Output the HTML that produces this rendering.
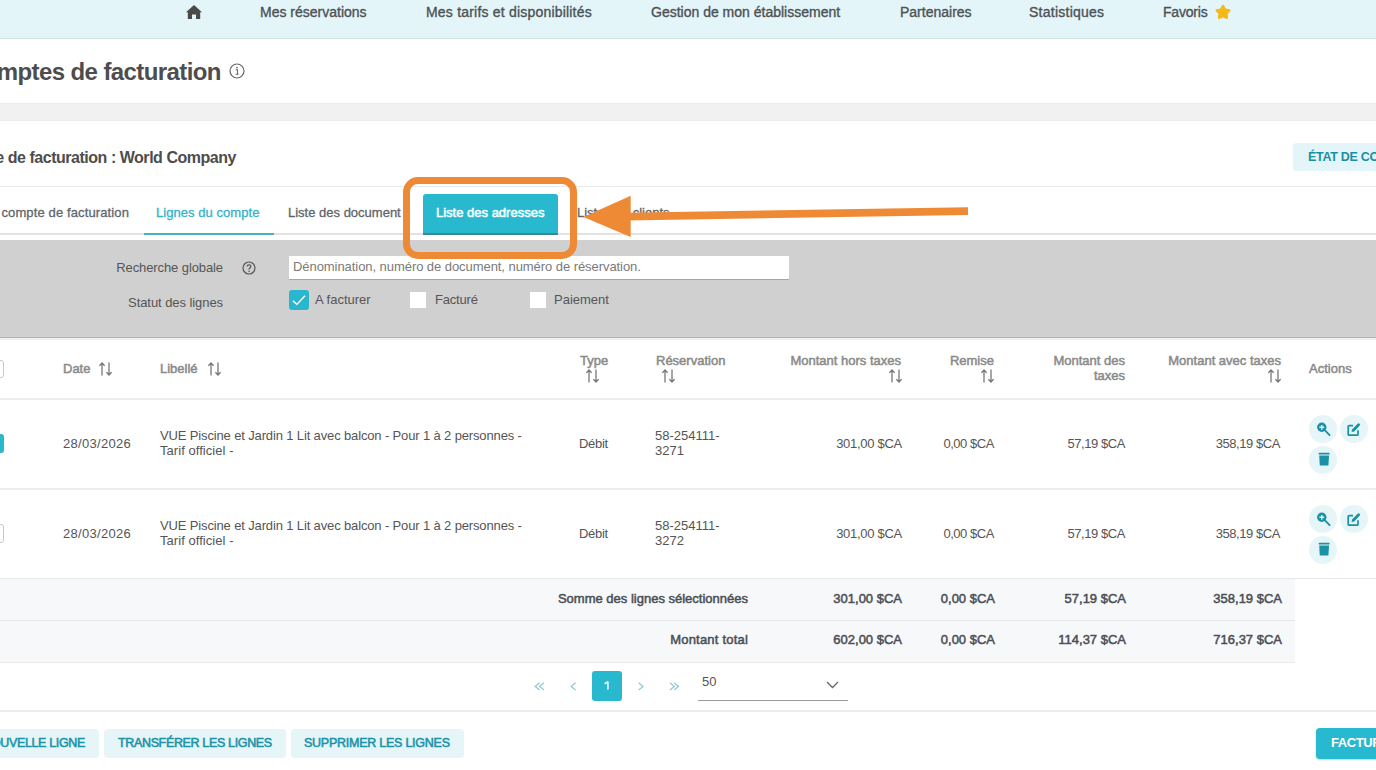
<!DOCTYPE html>
<html><head><meta charset="utf-8">
<style>
*{margin:0;padding:0;box-sizing:border-box}
html,body{width:1376px;height:770px;overflow:hidden;background:#fff;font-family:"Liberation Sans",sans-serif;color:#4d4d4d;position:relative}
.a{position:absolute}
.t{position:absolute;line-height:1;white-space:nowrap}
.r{text-align:right}
.nav{left:0;top:0;width:1376px;height:39px;background:#e3f5f9;border-bottom:1px solid #cfe3e5}
.nt{font-size:14px;color:#4e5254;top:5px;-webkit-text-stroke:0.35px #4e5254}
.band{left:0;top:103px;width:1376px;height:18px;background:#f1f1f1;border-top:1px solid #ececec;border-bottom:1px solid #ebebeb}
.hl{left:0;width:1376px;height:1px;background:#e8e8e8}
.tab{font-size:13px;color:#5f666b;top:206px;-webkit-text-stroke:0.3px currentColor}
.filter{left:0;top:240px;width:1376px;height:98px;background:#d0d0d0;border-bottom:1px solid #b4b4b4}
.fl{font-size:13px;color:#555;}
.th{font-size:13px;color:#8a8a8a;-webkit-text-stroke:0.5px #8a8a8a}
.td{font-size:13px;color:#555}
.tot{font-size:13px;color:#4a4f55;-webkit-text-stroke:0.5px #4a4f55}
.btn{background:#e5f5f8;border-radius:4px;height:29px;top:729px}
.bt{font-size:12.5px;color:#1c93a8;-webkit-text-stroke:0.55px #1c93a8;letter-spacing:-0.35px;top:737px}
.circ{width:28px;height:28px;border-radius:50%;background:#e5f5f8}
</style></head><body>

<!-- NAV -->
<div class="a nav"></div>
<svg class="a" style="left:186px;top:5px" width="16" height="14" viewBox="0 0 16 14"><path d="M8 0 L16 7.2 L14.2 7.2 L14.2 14 L10 14 L10 9.5 L6 9.5 L6 14 L1.8 14 L1.8 7.2 L0 7.2 Z" fill="#4a4a4a"/></svg>
<div class="t nt" style="left:260px">Mes réservations</div>
<div class="t nt" style="left:426px;letter-spacing:0.2px">Mes tarifs et disponibilités</div>
<div class="t nt" style="left:651px">Gestion de mon établissement</div>
<div class="t nt" style="left:900px">Partenaires</div>
<div class="t nt" style="left:1029px;letter-spacing:0.25px">Statistiques</div>
<div class="t nt" style="left:1163px;letter-spacing:-0.2px">Favoris</div>
<svg class="a" style="left:1205px;top:0px" width="40" height="30" viewBox="1205 0 40 30"><polygon points="1223.00,5.80 1225.17,9.51 1229.37,10.43 1226.52,13.64 1226.94,17.92 1223.00,16.20 1219.06,17.92 1219.48,13.64 1216.63,10.43 1220.83,9.51" fill="#f5b917" stroke="#f5b917" stroke-width="2.2" stroke-linejoin="round"/></svg>

<!-- TITLE -->
<div class="t" style="left:-34px;top:60px;font-size:24px;font-weight:bold;color:#4d4d4d;letter-spacing:-0.6px">Comptes de facturation</div>
<svg class="a" style="left:229px;top:63px" width="16" height="16" viewBox="0 0 16 16"><circle cx="8" cy="8" r="7" fill="none" stroke="#666" stroke-width="1.2"/><circle cx="8" cy="4.6" r="0.9" fill="#666"/><path d="M6.6 6.8 H8.5 V11.2 H9.5 M6.6 11.2 H9.5" fill="none" stroke="#666" stroke-width="1.1"/></svg>

<div class="a band"></div>

<!-- CARD HEADER -->
<div class="t" style="left:-53px;top:150px;font-size:16px;font-weight:bold;color:#4d4d4d;letter-spacing:-0.47px">Compte de facturation : World Company</div>
<div class="a" style="left:1293px;top:143px;width:120px;height:28px;background:#e3f5f9;border-radius:4px"></div>
<div class="t" style="left:1308px;top:151px;font-size:12.5px;font-weight:bold;color:#1a8fa3;letter-spacing:-0.3px">ÉTAT DE COMPTE</div>
<div class="a hl" style="top:186px"></div>

<!-- TABS -->
<div class="t tab r" style="right:1247px;letter-spacing:0.12px">Informations du compte de facturation</div>
<div class="t tab" style="left:156px;color:#35b3c6;letter-spacing:0.05px">Lignes du compte</div>
<div class="a" style="left:280px;top:200px;width:121px;height:25px;overflow:hidden"><div class="t tab" style="left:8px;top:6px">Liste des documents</div></div>
<div class="t tab" style="left:577px">Liste des clients</div>
<div class="a" style="left:0;top:233px;width:1376px;height:2px;background:#e2e2e2"></div>
<div class="a" style="left:144px;top:233px;width:130px;height:2px;background:#45b1c1"></div>
<div class="a" style="left:423px;top:194px;width:135px;height:41px;background:#28b9cf;border-radius:3px 3px 0 0;border-bottom:2px solid #3a8795"></div>
<div class="t" style="left:436px;top:206px;font-size:13px;color:#f4fdff;-webkit-text-stroke:0.55px #f4fdff">Liste des adresses</div>

<!-- FILTER -->
<div class="a filter"></div>
<div class="a" style="left:0;top:338px;width:1376px;height:1.5px;background:#efefef"></div>
<div class="t fl r" style="right:1153px;top:261px;letter-spacing:-0.1px">Recherche globale</div>
<svg class="a" style="left:242px;top:261px" width="14" height="14" viewBox="0 0 14 14"><circle cx="7" cy="7" r="6" fill="none" stroke="#555" stroke-width="1.2"/><path d="M5.1 5.4 C5.1 3.4 8.9 3.4 8.9 5.4 C8.9 6.7 7 6.8 7 8.4" fill="none" stroke="#555" stroke-width="1.2"/><circle cx="7" cy="10.2" r="0.8" fill="#555"/></svg>
<div class="a" style="left:289px;top:256px;width:500px;height:23.6px;background:#fff;border-bottom:1px solid #a5a5a5"></div>
<div class="t" style="left:293px;top:260px;font-size:13px;color:#7a7a7a;letter-spacing:-0.06px">Dénomination, numéro de document, numéro de réservation.</div>
<div class="t fl r" style="right:1153px;top:296px;letter-spacing:-0.07px">Statut des lignes</div>
<div class="a" style="left:289px;top:290px;width:20px;height:20px;background:#2ab6cc;border-radius:3px"></div>
<svg class="a" style="left:289px;top:290px" width="20" height="20" viewBox="0 0 20 20"><path d="M3.8 10.8 L7.9 14.4 L16 5.7" fill="none" stroke="#fff" stroke-width="1.4"/></svg>
<div class="t fl" style="left:315px;top:293px">A facturer</div>
<div class="a" style="left:410px;top:292px;width:16px;height:16px;background:#fff"></div>
<div class="t fl" style="left:435px;top:293px;letter-spacing:-0.2px">Facturé</div>
<div class="a" style="left:530px;top:292px;width:16px;height:16px;background:#fff"></div>
<div class="t fl" style="left:554px;top:293px">Paiement</div>

<!-- TABLE HEADER -->
<div class="a" style="left:-16px;top:360px;width:20px;height:18px;border:1px solid #c9c9c9;border-radius:3px;background:#fff"></div>
<div class="t th" style="left:63px;top:362px">Date</div>
<div class="t th" style="left:160px;top:362px">Libellé</div>
<div class="t th" style="left:580px;top:354px">Type</div>
<div class="t th" style="left:656px;top:354px">Réservation</div>
<div class="t th r" style="right:475px;top:354px">Montant hors taxes</div>
<div class="t th r" style="right:382px;top:354px">Remise</div>
<div class="t th r" style="right:251px;top:354px">Montant des</div>
<div class="t th r" style="right:251px;top:369px">taxes</div>
<div class="t th r" style="right:95px;top:354px">Montant avec taxes</div>
<div class="t th" style="left:1309px;top:362px">Actions</div>
<div class="a" style="left:0;top:398px;width:1376px;height:2px;background:#ededed"></div>

<svg class="a" style="left:99px;top:362px" width="13" height="14" viewBox="0 0 13 14"><path d="M3 1 V13.5 M0.4 3.8 L3 1 L5.6 3.8 M10 0.5 V13 M7.4 10.2 L10 13 L12.6 10.2" fill="none" stroke="#777" stroke-width="1.3"/></svg>
<svg class="a" style="left:208px;top:362px" width="13" height="14" viewBox="0 0 13 14"><path d="M3 1 V13.5 M0.4 3.8 L3 1 L5.6 3.8 M10 0.5 V13 M7.4 10.2 L10 13 L12.6 10.2" fill="none" stroke="#777" stroke-width="1.3"/></svg>
<svg class="a" style="left:586px;top:369px" width="13" height="14" viewBox="0 0 13 14"><path d="M3 1 V13.5 M0.4 3.8 L3 1 L5.6 3.8 M10 0.5 V13 M7.4 10.2 L10 13 L12.6 10.2" fill="none" stroke="#777" stroke-width="1.3"/></svg>
<svg class="a" style="left:662px;top:369px" width="13" height="14" viewBox="0 0 13 14"><path d="M3 1 V13.5 M0.4 3.8 L3 1 L5.6 3.8 M10 0.5 V13 M7.4 10.2 L10 13 L12.6 10.2" fill="none" stroke="#777" stroke-width="1.3"/></svg>
<svg class="a" style="left:889px;top:369px" width="13" height="14" viewBox="0 0 13 14"><path d="M3 1 V13.5 M0.4 3.8 L3 1 L5.6 3.8 M10 0.5 V13 M7.4 10.2 L10 13 L12.6 10.2" fill="none" stroke="#777" stroke-width="1.3"/></svg>
<svg class="a" style="left:981px;top:369px" width="13" height="14" viewBox="0 0 13 14"><path d="M3 1 V13.5 M0.4 3.8 L3 1 L5.6 3.8 M10 0.5 V13 M7.4 10.2 L10 13 L12.6 10.2" fill="none" stroke="#777" stroke-width="1.3"/></svg>
<svg class="a" style="left:1268px;top:369px" width="13" height="14" viewBox="0 0 13 14"><path d="M3 1 V13.5 M0.4 3.8 L3 1 L5.6 3.8 M10 0.5 V13 M7.4 10.2 L10 13 L12.6 10.2" fill="none" stroke="#777" stroke-width="1.3"/></svg>

<!-- ROW 1 -->
<div class="a" style="left:-16px;top:434px;width:20px;height:19px;background:#2ab6cc;border-radius:3px"></div>
<div class="t td" style="left:63px;top:437px;letter-spacing:0.3px">28/03/2026</div>
<div class="t td" style="left:160px;top:429px;letter-spacing:-0.14px">VUE Piscine et Jardin 1 Lit avec balcon - Pour 1 à 2 personnes -</div>
<div class="t td" style="left:160px;top:444px;letter-spacing:0.05px">Tarif officiel -</div>
<div class="t td" style="left:579px;top:437px;letter-spacing:-0.3px">Débit</div>
<div class="t td" style="left:655px;top:429px">58-254111-</div>
<div class="t td" style="left:655px;top:444px">3271</div>
<div class="t td r" style="right:474px;top:437px;letter-spacing:-0.28px">301,00 $CA</div>
<div class="t td r" style="right:382px;top:437px;letter-spacing:-0.45px">0,00 $CA</div>
<div class="t td r" style="right:251px;top:437px;letter-spacing:-0.44px">57,19 $CA</div>
<div class="t td r" style="right:96px;top:437px;letter-spacing:-0.44px">358,19 $CA</div>
<div class="a" style="left:0;top:488px;width:1376px;height:2px;background:#ededed"></div>

<!-- ROW 2 -->
<div class="a" style="left:-16px;top:524px;width:20px;height:19px;border:1px solid #c9c9c9;border-radius:3px;background:#fff"></div>
<div class="t td" style="left:63px;top:527px;letter-spacing:0.3px">28/03/2026</div>
<div class="t td" style="left:160px;top:519px;letter-spacing:-0.14px">VUE Piscine et Jardin 1 Lit avec balcon - Pour 1 à 2 personnes -</div>
<div class="t td" style="left:160px;top:534px;letter-spacing:0.05px">Tarif officiel -</div>
<div class="t td" style="left:579px;top:527px;letter-spacing:-0.3px">Débit</div>
<div class="t td" style="left:655px;top:519px">58-254111-</div>
<div class="t td" style="left:655px;top:534px">3272</div>
<div class="t td r" style="right:474px;top:527px;letter-spacing:-0.28px">301,00 $CA</div>
<div class="t td r" style="right:382px;top:527px;letter-spacing:-0.45px">0,00 $CA</div>
<div class="t td r" style="right:251px;top:527px;letter-spacing:-0.44px">57,19 $CA</div>
<div class="t td r" style="right:96px;top:527px;letter-spacing:-0.44px">358,19 $CA</div>
<div class="a" style="left:0;top:578px;width:1376px;height:1px;background:#e6e6e6"></div>

<div class="a circ" style="left:1309.3px;top:414.5px"></div>
<div class="a circ" style="left:1340px;top:414.5px"></div>
<div class="a circ" style="left:1309.3px;top:445.5px"></div>
<svg class="a" style="left:1310px;top:0px" width="60" height="480" viewBox="1310 0 60 480"><g transform="translate(0 0)"><circle cx="1321.8" cy="427.3" r="4.7" fill="#1a91a6"/><path d="M1321.8 424.9 V429.7 M1319.4 427.3 H1324.2" stroke="#e6f6f9" stroke-width="1.4"/><path d="M1325.2 430.7 L1329.6 435.1" stroke="#1a91a6" stroke-width="1.9" stroke-linecap="round"/>
<path d="M1353 425.6 H1349.2 A1 1 0 0 0 1348.2 426.6 V434.2 A1 1 0 0 0 1349.2 435.2 H1357 A1 1 0 0 0 1358 434.2 V430.2" fill="none" stroke="#1a91a6" stroke-width="1.7"/><path d="M1351.6 432 L1352 429.4 L1357.6 423.8 A1.2 1.2 0 0 1 1359.6 425.8 L1354.2 431.6 Z" fill="#1a91a6"/>
<rect x="1318.6" y="452.8" width="11" height="1.8" rx="0.6" fill="#1a91a6"/><path d="M1319.2 455.4 H1329 L1328.4 465.4 H1319.8 Z" fill="#1a91a6"/></g></svg>
<div class="a circ" style="left:1309.3px;top:504.5px"></div>
<div class="a circ" style="left:1340px;top:504.5px"></div>
<div class="a circ" style="left:1309.3px;top:535.5px"></div>
<svg class="a" style="left:1310px;top:90px" width="60" height="480" viewBox="1310 90 60 480"><g transform="translate(0 90)"><circle cx="1321.8" cy="427.3" r="4.7" fill="#1a91a6"/><path d="M1321.8 424.9 V429.7 M1319.4 427.3 H1324.2" stroke="#e6f6f9" stroke-width="1.4"/><path d="M1325.2 430.7 L1329.6 435.1" stroke="#1a91a6" stroke-width="1.9" stroke-linecap="round"/>
<path d="M1353 425.6 H1349.2 A1 1 0 0 0 1348.2 426.6 V434.2 A1 1 0 0 0 1349.2 435.2 H1357 A1 1 0 0 0 1358 434.2 V430.2" fill="none" stroke="#1a91a6" stroke-width="1.7"/><path d="M1351.6 432 L1352 429.4 L1357.6 423.8 A1.2 1.2 0 0 1 1359.6 425.8 L1354.2 431.6 Z" fill="#1a91a6"/>
<rect x="1318.6" y="452.8" width="11" height="1.8" rx="0.6" fill="#1a91a6"/><path d="M1319.2 455.4 H1329 L1328.4 465.4 H1319.8 Z" fill="#1a91a6"/></g></svg>

<!-- TOTALS -->
<div class="a" style="left:0;top:579px;width:1295px;height:83px;background:#f7f8fa"></div>
<div class="a" style="left:0;top:620px;width:1295px;height:1px;background:#e6e6e6"></div>
<div class="a" style="left:0;top:662px;width:1295px;height:1px;background:#e9e9e9"></div>
<div class="t tot r" style="right:628px;top:592px">Somme des lignes sélectionnées</div>
<div class="t tot r" style="right:474px;top:592px">301,00 $CA</div>
<div class="t tot r" style="right:381px;top:592px">0,00 $CA</div>
<div class="t tot r" style="right:250px;top:592px">57,19 $CA</div>
<div class="t tot r" style="right:94px;top:592px">358,19 $CA</div>
<div class="t tot r" style="right:628px;top:633px;letter-spacing:0.2px">Montant total</div>
<div class="t tot r" style="right:474px;top:633px">602,00 $CA</div>
<div class="t tot r" style="right:381px;top:633px">0,00 $CA</div>
<div class="t tot r" style="right:250px;top:633px">114,37 $CA</div>
<div class="t tot r" style="right:94px;top:633px">716,37 $CA</div>

<!-- PAGINATION -->
<svg class="a" style="left:520px;top:676px" width="170" height="20" viewBox="520 676 170 20"><path d="M539.6 682.8 L535.2 686.4 L539.6 690 M544 682.8 L539.6 686.4 L544 690 M575.6 682.8 L571.2 686.4 L575.6 690 M638.6 682.8 L643 686.4 L638.6 690 M669.9 682.8 L674.3 686.4 L669.9 690 M674.1 682.8 L678.5 686.4 L674.1 690" fill="none" stroke="#8ecbd4" stroke-width="1.25"/></svg>
<div class="a" style="left:592px;top:671px;width:30px;height:30px;background:#29b9cf;border-radius:3px"></div>
<svg class="a" style="left:600px;top:678px" width="14" height="14" viewBox="600 678 14 14"><path d="M607.9 681.4 V689.6 M604.6 683.9 L607.9 681.6" fill="none" stroke="#fff" stroke-width="1.5"/></svg>
<div class="t" style="left:702px;top:675px;font-size:13px;color:#555">50</div>
<div class="a" style="left:698px;top:700px;width:150px;height:1px;background:#9a9a9a"></div>
<svg class="a" style="left:826px;top:681px" width="13" height="8" viewBox="0 0 13 8"><path d="M1 1 L6.5 6.5 L12 1" fill="none" stroke="#666" stroke-width="1.3"/></svg>
<div class="a" style="left:0;top:710px;width:1376px;height:2px;background:#ececec"></div>

<!-- BOTTOM BUTTONS -->
<div class="a btn" style="left:-40px;width:139px"></div>
<div class="t bt r" style="right:1291px">NOUVELLE LIGNE</div>
<div class="a btn" style="left:104px;width:182px"></div>
<div class="t bt" style="left:118px">TRANSFÉRER LES LIGNES</div>
<div class="a btn" style="left:291px;width:173px"></div>
<div class="t bt" style="left:304px;letter-spacing:-0.25px">SUPPRIMER LES LIGNES</div>
<div class="a" style="left:1316px;top:728px;width:100px;height:31px;background:#27b9cf;border-radius:4px;box-shadow:0 1px 2px rgba(0,0,0,0.2)"></div>
<div class="t" style="left:1331px;top:736px;font-size:13px;font-weight:bold;color:#fff;letter-spacing:-0.4px">FACTURER</div>

<!-- ANNOTATION -->
<div class="a" style="left:403px;top:177px;width:173.5px;height:81.5px;border:7.6px solid #ee8a36;border-radius:15px"></div>
<svg class="a" style="left:0;top:0" width="1376" height="300" viewBox="0 0 1376 300"><polygon points="583.4,217.1 630.7,195.8 630.7,237" fill="#ee8a36"/><polygon points="626,212.8 968,207.3 968,214.9 626,220.4" fill="#ee8a36"/></svg>
</body></html>
